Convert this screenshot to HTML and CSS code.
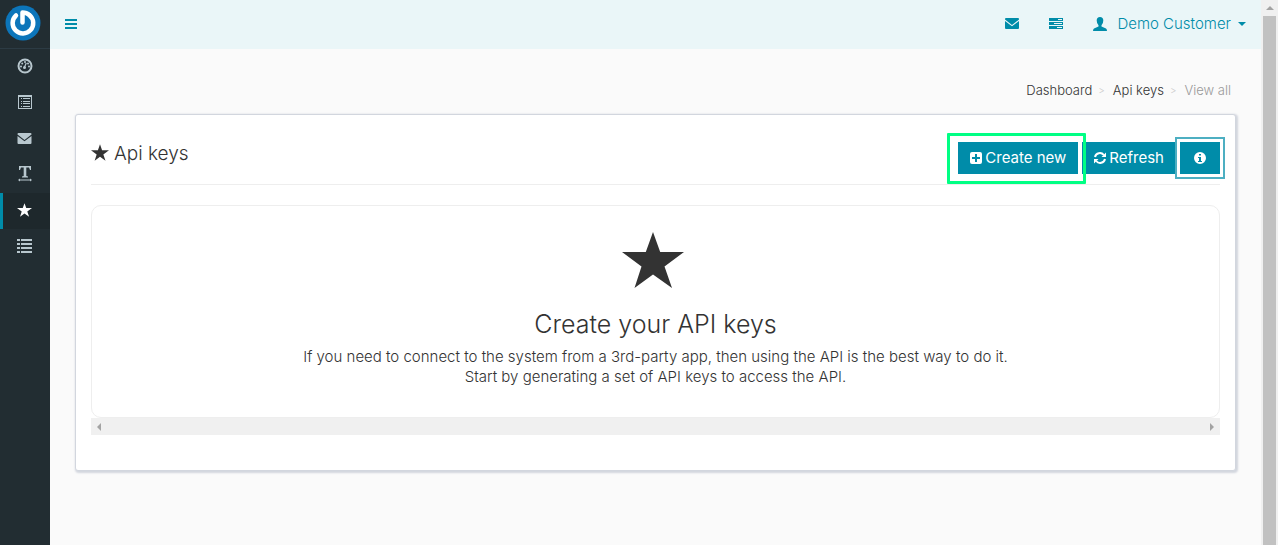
FILE: index.html
```
<!DOCTYPE html>
<html lang="en">
<head>
    <meta charset="UTF-8">
    <meta name="viewport" content="width=device-width, initial-scale=1.0">
    <title>Api keys | View all</title>
    <link rel="stylesheet" href="styles.css">
</head>
<body>
    <!-- shared icons -->
    <svg class="icon-defs" aria-hidden="true">
        <symbol id="icon-star" viewBox="0 0 62 56">
            <path d="M31 0l7.200 20H62L42.500 34.500 50 56 31 42.500 12.500 56l7-21.500L0 20h23.800z"/>
        </symbol>
        <symbol id="icon-envelope" viewBox="0 0 14 11">
            <path d="M1 0h12q1 0 1 1v.6L7 7 0 1.600V1q0-1 1-1zM0 3l7 5.300L14 3v7q0 1-1 1H1q-1 0-1-1z"/>
        </symbol>
    </svg>

    <div class="app">
        <aside class="sidebar">
            <a class="logo" href="#" aria-label="Home">
                <svg width="36" height="36" viewBox="0 0 36 36">
                    <circle cx="18" cy="18" r="17.500" fill="#0c75ba"/>
                    <path d="M11 10.500A10.300 10.300 0 1 0 24.500 10.200" fill="none" stroke="#fff" stroke-width="4.500" stroke-linecap="round"/>
                    <path d="M17.500 17.500V7.500q4 0 7 2.700" fill="none" stroke="#fff" stroke-width="4.500" stroke-linecap="round" stroke-linejoin="round"/>
                </svg>
            </a>
            <nav class="menu">
                <a href="#" aria-label="Dashboard">
                    <svg width="16" height="16" viewBox="0 0 16 16">
                        <circle cx="8" cy="8" r="6.500" fill="none" stroke="currentColor" stroke-width="2"/>
                        <path d="M7.300 9.500l2-4.500" stroke="currentColor" stroke-width="1.200"/>
                        <circle cx="7.500" cy="9.500" r="1.500"/>
                        <circle cx="4" cy="8.500" r="1"/><circle cx="5.200" cy="5.500" r="1"/><circle cx="8" cy="4" r="1"/><circle cx="11" cy="5.500" r="1"/><circle cx="12" cy="8.500" r="1"/>
                    </svg>
                </a>
                <a href="#" aria-label="Lists">
                    <svg width="16" height="16" viewBox="0 0 16 16">
                        <path fill-rule="evenodd" d="M1 1h14v14H1zM2 3v11h12V3z"/>
                        <path d="M4 4h1v1H4zM6 4h7v1H6zM4 7h1v1H4zM6 7h7v1H6zM4 9h1v1H4zM6 9h7v1H6zM4 12h1v1H4zM6 12h7v1H6z"/>
                    </svg>
                </a>
                <a href="#" aria-label="Campaigns">
                    <svg width="15" height="11"><use href="#icon-envelope"/></svg>
                </a>
                <a href="#" aria-label="Templates">
                    <svg width="14" height="16" viewBox="0 0 14 16">
                        <path d="M1 0h12v4h-1L11 1.500H8.300V10l1.700.5v1H4v-1l1.700-.5V1.500H3L2 4H1zM0 14l2-1.500v1h10v-1l2 1.500-2 1.500v-1H2v1z"/>
                    </svg>
                </a>
                <a class="active" href="#" aria-label="Api keys">
                    <svg width="15" height="14"><use href="#icon-star"/></svg>
                </a>
                <a href="#" aria-label="Articles">
                    <svg width="15" height="14" viewBox="0 0 15 14">
                        <path d="M0 0h3v2H0zM4 0h11v2H4zM0 4h3v2H0zM4 4h11v2H4zM0 8h3v2H0zM4 8h11v2H4zM0 12h3v2H0zM4 12h11v2H4z"/>
                    </svg>
                </a>
            </nav>
        </aside>

        <div class="page">
            <header class="topbar">
                <button class="toggle" type="button" aria-label="Toggle navigation">
                    <svg width="12" height="10" viewBox="0 0 12 10"><path d="M0 0h12v2H0zM0 4h12v2H0zM0 8h12v2H0z"/></svg>
                </button>
                <nav class="top-links">
                    <a href="#" aria-label="Messages"><svg width="14" height="11"><use href="#icon-envelope"/></svg></a>
                    <a href="#" aria-label="Quota usage">
                        <svg width="14" height="11" viewBox="0 0 14 11">
                            <path fill-rule="evenodd" d="M0 0h14v3H0zM9 1v1h4V1zM0 4h14v3H0zM5 5v1h8V5zM0 8h14v3H0zM8 9v1h5V9z"/>
                        </svg>
                    </a>
                    <a class="user" href="#">
                        <svg width="14" height="14" viewBox="0 0 14 14">
                            <path d="M7 0q3.300 0 3.300 3.500 0 3-1.800 4.800v1.200l4.500 2Q14 12 14 14H0q0-2 1-2.500l4.500-2V8.300Q3.700 6.500 3.700 3.500 3.700 0 7 0z"/>
                        </svg>
                        <span>Demo Customer</span>
                        <i class="caret"></i>
                    </a>
                </nav>
            </header>

            <main class="content">
                <nav class="breadcrumb" aria-label="Breadcrumb">
                    <a href="#">Dashboard</a>
                    <span class="sep">&gt;</span>
                    <a href="#">Api keys</a>
                    <span class="sep">&gt;</span>
                    <span class="current">View all</span>
                </nav>

                <section class="box">
                    <div class="box-header">
                        <h1><svg width="18" height="17"><use href="#icon-star"/></svg>Api keys</h1>
                        <div class="actions">
                            <button class="btn highlight" type="button">
                                <svg width="12" height="12" viewBox="0 0 12 12"><path fill-rule="evenodd" d="M2 0h8q2 0 2 2v8q0 2-2 2H2q-2 0-2-2V2q0-2 2-2zM5 2v3H2v2h3v3h2V7h3V5H7V2z"/></svg>
                                Create new
                            </button>
                            <button class="btn" type="button">
                                <svg width="12" height="12" viewBox="0 0 12 12">
                                    <path d="M1 5a5 5 0 0 1 8.800-2M11 7a5 5 0 0 1-8.800 2" fill="none" stroke="currentColor" stroke-width="2"/>
                                    <path d="M12 .5V5H7.500zM0 11.500V7h4.500z"/>
                                </svg>
                                Refresh
                            </button>
                            <button class="btn focused" type="button" aria-label="Info">
                                <svg width="12" height="12" viewBox="0 0 12 12"><path fill-rule="evenodd" d="M6 0a6 6 0 1 1 0 12A6 6 0 0 1 6 0zM5 2v1.500h2V2zM4 5v1h1v3H4v1h4V9H7V5z"/></svg>
                            </button>
                        </div>
                    </div>

                    <div class="empty">
                        <svg width="62" height="56"><use href="#icon-star"/></svg>
                        <h2>Create your API keys</h2>
                        <p>If you need to connect to the system from a 3rd-party app, then using the API is the best way to do it.<br>
                        Start by generating a set of API keys to access the API.</p>
                    </div>
                    <div class="scroll-x">
                        <i class="arrow-left"></i>
                        <i class="arrow-right"></i>
                    </div>
                </section>
            </main>
        </div>

        <div class="scroll-y">
            <i class="arrow-up"></i>
            <div class="thumb"></div>
        </div>
    </div>
</body>
</html>
```
FILE: styles.css
```
* {
    box-sizing: border-box;
}

body {
    margin: 0;
    font-family: Inter, sans-serif;
    font-size: 15px;
    font-weight: 300;
    line-height: 20px;
    color: #333;
    background: #fafafa;
}

a {
    color: inherit;
    text-decoration: none;
}

button {
    font: inherit;
    border: 0;
    cursor: pointer;
}

svg {
    display: block;
    flex-shrink: 0;
    fill: currentColor;
}

.icon-defs {
    position: absolute;
    width: 0;
    height: 0;
}

.app {
    display: flex;
    height: 100vh;
    overflow: hidden;
}

/* sidebar */
.sidebar {
    width: 50px;
    flex-shrink: 0;
    background: #222d32;
}

.logo {
    display: flex;
    align-items: center;
    justify-content: center;
    height: 49px;
    padding: 0 4px 2px 0;
    border-bottom: 1px solid #2c3b44;
}

.menu a {
    display: flex;
    align-items: center;
    justify-content: center;
    height: 36px;
    border-left: 3px solid transparent;
    padding: 0 4px 2px 0;
    color: #b8c7ce;
}

.menu .active {
    color: #fff;
    background: #1e282c;
    border-left-color: #008ca9;
}

/* top bar */
.page {
    flex: 1;
    min-width: 0;
}

.topbar {
    display: flex;
    align-items: center;
    justify-content: space-between;
    height: 49px;
    padding: 0 15px 2px;
    color: #008ca9;
    background: #eaf6f8;
}

.toggle {
    padding: 0;
    color: inherit;
    background: none;
}

.top-links {
    display: flex;
    align-items: center;
    gap: 30px;
}

.user {
    display: flex;
    align-items: center;
    gap: 10px;
}

.caret {
    margin-left: -3px;
    border: 4px solid transparent;
    border-top-color: currentColor;
    border-bottom: 0;
}

/* content */
.content {
    padding: 31px 25px 24px;
}

.breadcrumb {
    display: flex;
    justify-content: flex-end;
    gap: 6px;
    padding-right: 5px;
    font-size: 13px;
    margin-bottom: 14px;
}

.sep {
    color: #ccc;
    font-size: 10px;
    padding-right: 2px;
}

.current {
    color: #999;
}

.box {
    padding: 15px 15px 35px;
    background: #fff;
    border: 1px solid #d2d6de;
    border-radius: 3px;
    box-shadow: 1px 1px 2px 1px #d2d6de;
}

.box-header {
    display: flex;
    align-items: center;
    justify-content: space-between;
    height: 55px;
    padding-top: 2px;
    border-bottom: 1px solid #eee;
    margin-bottom: 20px;
}

.box-header h1 {
    display: flex;
    align-items: center;
    gap: 5px;
    margin: 0 0 8px;
    font-size: 19px;
    font-weight: 300;
}

.box-header h1 svg {
    margin-bottom: 4px;
}

.actions {
    display: flex;
    gap: 4px;
}

.btn {
    position: relative;
    display: flex;
    align-items: center;
    gap: 3px;
    height: 32px;
    padding: 0 12px;
    font-weight: 400;
    color: #fff;
    background: #008ca9;
}

.focused {
    padding: 0 14px;
    box-shadow: 0 0 0 3px #fff, 0 0 0 5px #4dafc2;
}

.highlight::after {
    content: "";
    position: absolute;
    z-index: 1;
    inset: -9px -8px -10px -11px;
    border: 3px solid #00ff84;
    border-radius: 1px;
}

.empty {
    display: flex;
    flex-direction: column;
    align-items: center;
    padding: 26px 20px 30px;
    border: 1px solid #eee;
    border-radius: 10px;
    text-align: center;
}

.empty svg {
    margin-right: 5px;
}

.empty h2 {
    margin: 23px 0 10px;
    font-size: 25px;
    font-weight: 300;
    line-height: 26px;
}

.empty p {
    margin: 0;
}

/* scrollbars */
.scroll-x {
    display: flex;
    align-items: center;
    justify-content: space-between;
    height: 17px;
    padding: 0 6px;
    background: #f0f0f0;
}

.arrow-left,
.arrow-right,
.arrow-up {
    border: 4px solid transparent;
}

.arrow-left {
    border-left: 0;
    border-right-color: #a3a3a3;
}

.arrow-right {
    border-right: 0;
    border-left-color: #a3a3a3;
}

.scroll-y {
    display: flex;
    flex-direction: column;
    align-items: center;
    width: 17px;
    flex-shrink: 0;
    padding-top: 6px;
    background: #f0f0f0;
}

.arrow-up {
    border-top: 0;
    border-bottom-color: #a3a3a3;
}

.thumb {
    width: 13px;
    flex: 1;
    margin-top: 6px;
    background: #c1c1c1;
}
```
